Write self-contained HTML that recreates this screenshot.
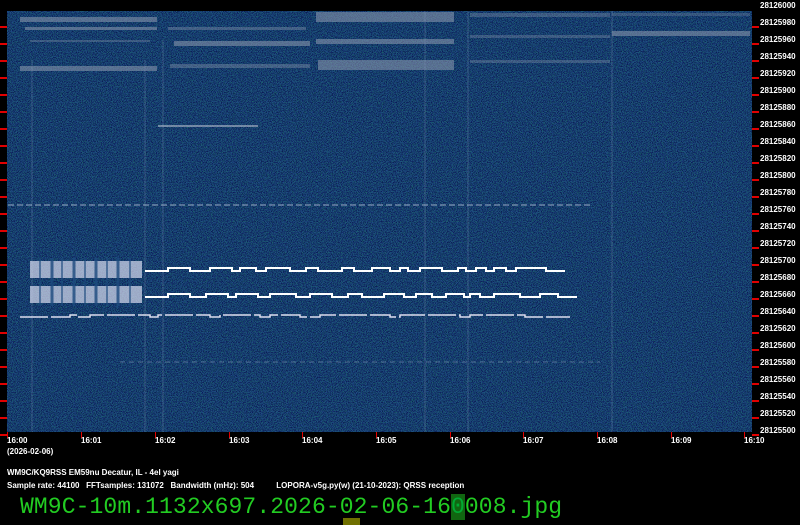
<!DOCTYPE html>
<html><head><meta charset="utf-8"><style>
body{margin:0;background:#000;width:800px;height:525px;overflow:hidden;position:relative;font-family:"Liberation Sans",sans-serif}
.t{position:absolute;color:#fff;font-size:8px;font-weight:bold;white-space:nowrap}
.fn{position:absolute;left:20px;top:495px;font-family:"Liberation Mono",monospace;font-size:23px;color:#22cc22;letter-spacing:0.1px;white-space:nowrap;line-height:24px}
</style></head><body>
<svg width="800" height="525" style="position:absolute;left:0;top:0" color-interpolation-filters="sRGB">
<defs>
<filter id="n" x="0" y="0" width="100%" height="100%" color-interpolation-filters="sRGB">
<feTurbulence type="fractalNoise" baseFrequency="1.2" numOctaves="1" seed="3"/>
<feColorMatrix values="0 0 0 0 0.04  0 0 0 0 0.1  0 0 0 0 0.33  0 0 0 6 -2.7"/>
</filter>
<filter id="m" x="0" y="0" width="100%" height="100%" color-interpolation-filters="sRGB">
<feTurbulence type="fractalNoise" baseFrequency="1.2" numOctaves="1" seed="9"/>
<feColorMatrix values="0 0 0 0 0.1  0 0 0 0 0.4  0 0 0 0 0.4  0 0 0 6 -2.9"/>
</filter>
</defs>
<rect x="7" y="11" width="745" height="421" fill="#1e4c84"/>
<rect x="7" y="11" width="745" height="421" filter="url(#m)"/>
<rect x="7" y="11" width="745" height="421" filter="url(#n)"/>
<g fill="#8f9bb0" opacity="0.55">
<rect x="20" y="17" width="137" height="5"/><rect x="25" y="27" width="132" height="3"/><rect x="30" y="40" width="120" height="2" opacity=".6"/><rect x="20" y="66" width="137" height="5"/>
<rect x="168" y="27" width="138" height="3" opacity=".7"/><rect x="174" y="41" width="136" height="5"/><rect x="170" y="64" width="140" height="4" opacity=".7"/>
<rect x="316" y="12" width="138" height="10"/><rect x="316" y="39" width="138" height="5"/><rect x="318" y="60" width="136" height="10"/>
<rect x="470" y="13" width="140" height="4" opacity=".6"/><rect x="470" y="35" width="140" height="3" opacity=".6"/><rect x="470" y="60" width="140" height="3" opacity=".6"/>
<rect x="612" y="31" width="138" height="5"/><rect x="612" y="13" width="138" height="3" opacity=".5"/>
</g>
<g stroke="#8aa0c0" stroke-width="1" opacity=".3">
<line x1="32" y1="60" x2="32" y2="432"/><line x1="163" y1="40" x2="163" y2="432"/><line x1="145" y1="60" x2="145" y2="432"/><line x1="425" y1="11" x2="425" y2="432"/><line x1="468" y1="11" x2="468" y2="432"/><line x1="612" y1="11" x2="612" y2="432"/>
</g>
<line x1="8" y1="205" x2="590" y2="205" stroke="#a8b8d0" stroke-width="1.5" stroke-dasharray="6,3" opacity=".6"/>
<line x1="120" y1="362" x2="600" y2="362" stroke="#a8b8d0" stroke-width="1" stroke-dasharray="5,4" opacity=".4"/>
<g stroke="#c8cdd8" stroke-width="1.5" fill="none" opacity=".7"><path d="M158 126H258"/></g>
<g fill="#d8dcf0" opacity=".7">
<rect x="30" y="261" width="112" height="17"/><rect x="30" y="286" width="112" height="17"/>
</g>
<g stroke="#1c4a7e" stroke-width="3" opacity=".8">
<line x1="52" y1="258" x2="52" y2="306"/><line x1="74" y1="258" x2="74" y2="306"/><line x1="96" y1="258" x2="96" y2="306"/><line x1="118" y1="258" x2="118" y2="306"/><line x1="40" y1="258" x2="40" y2="306" stroke-width="1.5"/><line x1="62" y1="258" x2="62" y2="306" stroke-width="1.5"/><line x1="85" y1="258" x2="85" y2="306" stroke-width="1.5"/><line x1="107" y1="258" x2="107" y2="306" stroke-width="1.5"/><line x1="130" y1="258" x2="130" y2="306" stroke-width="1.5"/>
</g>
<g stroke="#fff" stroke-width="2" fill="none">
<path d="M145 271H168V268H190V271H210V268H232V271H240V268H256V271H266V268H290V271H306V268H318V271H342V268H354V271H372V268H390V271H400V268H408V271H420V268H442V271H458V268H466V271H476V268H486V271H494V268H506V271H516V268H546V271H565"/>
<path d="M145 297H168V294H190V297H206V294H228V297H236V294H258V297H270V294H296V297H310V294H332V297H348V294H362V297H384V294H404V297H416V294H432V297H446V294H464V297H470V294H480V297H494V294H520V297H540V294H558V297H577"/>
</g>
<path d="M20 317H70V315H78V317H90V315H150V317H158V315H210V317H220V315H260V317H270V315H300V317H320V315H390V317H400V315H460V317H470V315H525V317H570" stroke="#dde" stroke-width="1.5" fill="none" stroke-dasharray="28,3"/>
<g fill="#e00000">
<rect x="0" y="26" width="7" height="2"/><rect x="0" y="43" width="7" height="2"/><rect x="0" y="60" width="7" height="2"/><rect x="0" y="77" width="7" height="2"/><rect x="0" y="94" width="7" height="2"/><rect x="0" y="111" width="7" height="2"/><rect x="0" y="128" width="7" height="2"/><rect x="0" y="145" width="7" height="2"/><rect x="0" y="162" width="7" height="2"/><rect x="0" y="179" width="7" height="2"/><rect x="0" y="196" width="7" height="2"/><rect x="0" y="213" width="7" height="2"/><rect x="0" y="230" width="7" height="2"/><rect x="0" y="247" width="7" height="2"/><rect x="0" y="264" width="7" height="2"/><rect x="0" y="281" width="7" height="2"/><rect x="0" y="298" width="7" height="2"/><rect x="0" y="315" width="7" height="2"/><rect x="0" y="332" width="7" height="2"/><rect x="0" y="349" width="7" height="2"/><rect x="0" y="366" width="7" height="2"/><rect x="0" y="383" width="7" height="2"/><rect x="0" y="400" width="7" height="2"/><rect x="0" y="417" width="7" height="2"/><rect x="0" y="434" width="7" height="2"/>
<rect x="752" y="26" width="7" height="2"/><rect x="752" y="43" width="7" height="2"/><rect x="752" y="60" width="7" height="2"/><rect x="752" y="77" width="7" height="2"/><rect x="752" y="94" width="7" height="2"/><rect x="752" y="111" width="7" height="2"/><rect x="752" y="128" width="7" height="2"/><rect x="752" y="145" width="7" height="2"/><rect x="752" y="162" width="7" height="2"/><rect x="752" y="179" width="7" height="2"/><rect x="752" y="196" width="7" height="2"/><rect x="752" y="213" width="7" height="2"/><rect x="752" y="230" width="7" height="2"/><rect x="752" y="247" width="7" height="2"/><rect x="752" y="264" width="7" height="2"/><rect x="752" y="281" width="7" height="2"/><rect x="752" y="298" width="7" height="2"/><rect x="752" y="315" width="7" height="2"/><rect x="752" y="332" width="7" height="2"/><rect x="752" y="349" width="7" height="2"/><rect x="752" y="366" width="7" height="2"/><rect x="752" y="383" width="7" height="2"/><rect x="752" y="400" width="7" height="2"/><rect x="752" y="417" width="7" height="2"/><rect x="752" y="434" width="7" height="2"/>
<rect x="7" y="432" width="1" height="6"/><rect x="81" y="432" width="1" height="6"/><rect x="155" y="432" width="1" height="6"/><rect x="229" y="432" width="1" height="6"/><rect x="302" y="432" width="1" height="6"/><rect x="376" y="432" width="1" height="6"/><rect x="450" y="432" width="1" height="6"/><rect x="523" y="432" width="1" height="6"/><rect x="597" y="432" width="1" height="6"/><rect x="671" y="432" width="1" height="6"/><rect x="744" y="432" width="1" height="6"/>
</g>
<rect x="343" y="518" width="17" height="7" fill="#707000"/>
</svg>
<div class="t" style="left:7px;top:436px">16:00</div>
<div class="t" style="left:81px;top:436px">16:01</div>
<div class="t" style="left:155px;top:436px">16:02</div>
<div class="t" style="left:229px;top:436px">16:03</div>
<div class="t" style="left:302px;top:436px">16:04</div>
<div class="t" style="left:376px;top:436px">16:05</div>
<div class="t" style="left:450px;top:436px">16:06</div>
<div class="t" style="left:523px;top:436px">16:07</div>
<div class="t" style="left:597px;top:436px">16:08</div>
<div class="t" style="left:671px;top:436px">16:09</div>
<div class="t" style="left:744px;top:436px">16:10</div>
<div class="t" style="left:7px;top:447px">(2026-02-06)</div>
<div class="t" style="left:7px;top:468px">WM9C/KQ9RSS EM59nu Decatur, IL - 4el yagi</div>
<div class="t" style="left:7px;top:481px">Sample rate: 44100 &nbsp;&nbsp;FFTsamples: 131072 &nbsp;&nbsp;Bandwidth (mHz): 504 &nbsp;&nbsp;&nbsp;&nbsp;&nbsp;&nbsp;&nbsp;&nbsp;&nbsp;LOPORA-v5g.py(w) (21-10-2023): QRSS reception</div>
<div class="fn">WM9C-10m.1132x697.2026-02-06-16<span style="background:#116611;color:#0a3">0</span>008.jpg</div>
<div style="position:absolute;left:760px;top:0;width:40px">
<div class="t" style="top:1px">28126000</div><div class="t" style="top:18px">28125980</div><div class="t" style="top:35px">28125960</div><div class="t" style="top:52px">28125940</div><div class="t" style="top:69px">28125920</div><div class="t" style="top:86px">28125900</div><div class="t" style="top:103px">28125880</div><div class="t" style="top:120px">28125860</div><div class="t" style="top:137px">28125840</div><div class="t" style="top:154px">28125820</div><div class="t" style="top:171px">28125800</div><div class="t" style="top:188px">28125780</div><div class="t" style="top:205px">28125760</div><div class="t" style="top:222px">28125740</div><div class="t" style="top:239px">28125720</div><div class="t" style="top:256px">28125700</div><div class="t" style="top:273px">28125680</div><div class="t" style="top:290px">28125660</div><div class="t" style="top:307px">28125640</div><div class="t" style="top:324px">28125620</div><div class="t" style="top:341px">28125600</div><div class="t" style="top:358px">28125580</div><div class="t" style="top:375px">28125560</div><div class="t" style="top:392px">28125540</div><div class="t" style="top:409px">28125520</div><div class="t" style="top:426px">28125500</div>
</div>
</body></html>
